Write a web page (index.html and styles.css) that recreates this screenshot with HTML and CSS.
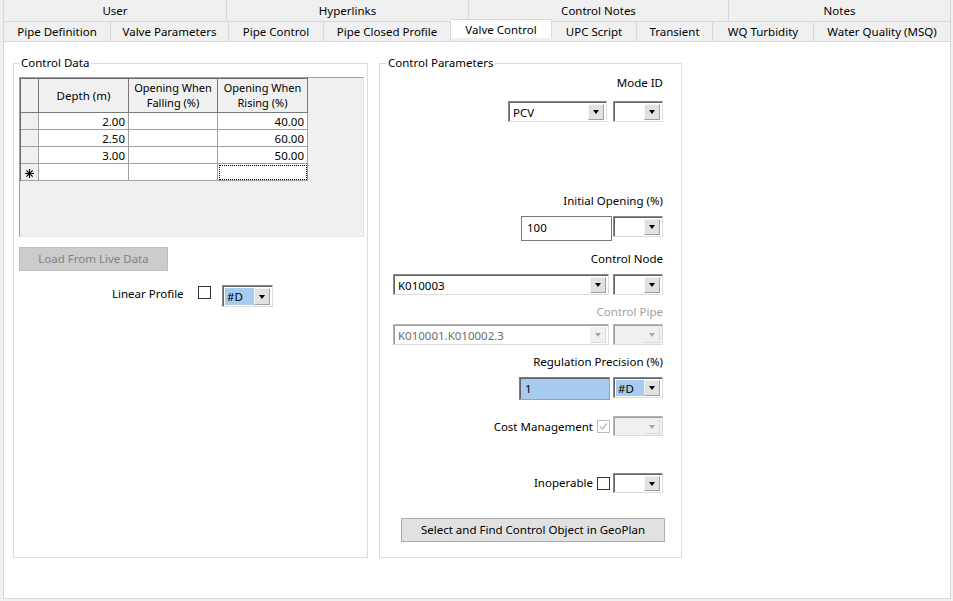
FILE: index.html
```html
<!DOCTYPE html>
<html>
<head>
<meta charset="utf-8">
<title>Valve Control</title>
<link rel="stylesheet" href="styles.css">
</head>
<body>
<div class="tabrow top">
  <div class="tab t-user">User</div>
  <div class="tab t-hyper">Hyperlinks</div>
  <div class="tab t-cnotes">Control Notes</div>
  <div class="tab t-notes">Notes</div>
</div>
<div class="tabrow bottom">
  <div class="tab t-pdef">Pipe Definition</div>
  <div class="tab t-vpar">Valve Parameters</div>
  <div class="tab t-pctl">Pipe Control</div>
  <div class="tab t-pcp">Pipe Closed Profile</div>
  <div class="tab t-vctl selected">Valve Control</div>
  <div class="tab t-upc">UPC Script</div>
  <div class="tab t-trans">Transient</div>
  <div class="tab t-wqt">WQ Turbidity</div>
  <div class="tab t-wqm">Water Quality (MSQ)</div>
</div>
<div class="panel">
  <fieldset class="group left">
    <legend>Control Data</legend>
    <div class="grid">
      <table>
        <colgroup><col class="c-rh"><col class="c-depth"><col class="c-fall"><col class="c-rise"></colgroup>
        <thead>
          <tr><th class="rh"></th><th>Depth (m)</th><th><span class="hl">Opening When</span><span class="hl">Falling (%)</span></th><th><span class="hl">Opening When</span><span class="hl">Rising (%)</span></th></tr>
        </thead>
        <tbody>
          <tr><td class="rh"></td><td>2.00</td><td></td><td>40.00</td></tr>
          <tr><td class="rh"></td><td>2.50</td><td></td><td>60.00</td></tr>
          <tr><td class="rh"></td><td>3.00</td><td></td><td>50.00</td></tr>
          <tr><td class="rh star"><svg width="9" height="9" viewBox="0 0 9 9"><path d="M4.5 0V9M0 4.5H9M1.3 1.3L7.7 7.7M7.7 1.3L1.3 7.7" stroke="#000" stroke-width="1.1"/></svg></td><td></td><td></td><td class="focus"></td></tr>
        </tbody>
      </table>
    </div>
    <button class="btn disabled load">Load From Live Data</button>
    <div class="linear">
      <span class="linear-label">Linear Profile</span>
      <span class="check"></span>
      <div class="combo lp"><span class="val sel">#D</span><span class="arrow"></span></div>
    </div>
  </fieldset>
  <fieldset class="group right">
    <legend>Control Parameters</legend>
    <div class="lbl l-mode">Mode ID</div>
    <div class="row r-mode">
      <div class="combo w-pcv"><span class="val">PCV</span><span class="arrow"></span></div>
      <div class="combo small"><span class="val"></span><span class="arrow"></span></div>
    </div>
    <div class="lbl l-init">Initial Opening (%)</div>
    <div class="row r-init">
      <div class="field f-init">100</div>
      <div class="combo small"><span class="val"></span><span class="arrow"></span></div>
    </div>
    <div class="lbl l-node">Control Node</div>
    <div class="row r-node">
      <div class="combo w-long"><span class="val">K010003</span><span class="arrow"></span></div>
      <div class="combo small"><span class="val"></span><span class="arrow"></span></div>
    </div>
    <div class="lbl dim l-pipe">Control Pipe</div>
    <div class="row r-pipe">
      <div class="combo w-long disabled wide"><span class="val">K010001.K010002.3</span><span class="arrow"></span></div>
      <div class="combo small disabled"><span class="val"></span><span class="arrow"></span></div>
    </div>
    <div class="lbl l-reg">Regulation Precision (%)</div>
    <div class="row r-reg">
      <div class="field f-reg sel">1</div>
      <div class="combo small"><span class="val sel">#D</span><span class="arrow"></span></div>
    </div>
    <div class="row r-cost">
      <span class="row-label">Cost Management</span>
      <span class="check disabled checked"><svg width="11" height="11" viewBox="0 0 11 11"><path d="M2 5.5L4.3 8L9 2.5" fill="none" stroke="#bcbcbc" stroke-width="1.2"/></svg></span>
      <div class="combo small disabled short"><span class="val"></span><span class="arrow"></span></div>
    </div>
    <div class="row r-inop">
      <span class="row-label">Inoperable</span>
      <span class="check"></span>
      <div class="combo small short"><span class="val"></span><span class="arrow"></span></div>
    </div>
    <button class="btn find">Select and Find Control Object in GeoPlan</button>
  </fieldset>
</div>
</body>
</html>
```
FILE: styles.css
```css
* { box-sizing: border-box; }
html, body { margin: 0; padding: 0; }
body {
  background: #f0f0f0;
  font-family: "Noto Sans", "Segoe UI", "Liberation Sans", sans-serif;
  font-size: 11.5px;
  line-height: 16px;
  color: #000;
  width: 953px;
  height: 601px;
  overflow: hidden;
}

/* tabs */
.tabrow { display: flex; padding-left: 3px; }
.tabrow.top { height: 22px; }
.tabrow.bottom { height: 19px; }
.tab {
  flex: none;
  display: flex;
  align-items: center;
  justify-content: center;
  white-space: nowrap;
  border-right: 1px solid #d9d9d9;
}
.tabrow .tab:first-child { border-left: 1px solid #d9d9d9; }
.tabrow.top .tab { height: 22px; border-bottom: 1px solid #d9d9d9; }
.tabrow.bottom .tab { height: 19px; padding-top: 1px; }
.tab.selected {
  background: #fff;
  height: 23px;
  margin-top: -3px;
  padding-top: 0;
  border-top: 1px solid #d9d9d9;
  position: relative;
  z-index: 2;
}
.t-user { width: 224px; }
.t-hyper { width: 242px; }
.t-cnotes { width: 260px; }
.t-notes { width: 222px; }
.t-pdef { width: 108px; }
.t-vpar { width: 118px; }
.t-pctl { width: 95px; }
.t-pcp { width: 127px; }
.t-vctl { width: 101px; }
.t-upc { width: 85px; }
.t-trans { width: 76px; }
.t-wqt { width: 101px; }
.t-wqm { width: 137px; }

/* panel */
.panel {
  margin-left: 3px;
  width: 948px;
  height: 558px;
  background: #fff;
  border: 1px solid #d9d9d9;
  padding: 13px 0 0 9px;
  display: flex;
  align-items: flex-start;
  gap: 11px;
}
.group {
  margin: 0;
  min-width: 0;
  height: 503px;
  border: 1px solid #dcdcdc;
}
.group legend { padding: 0 2px; line-height: 16px; }
.group.left { width: 355px; padding: 0 3px 0 5px; }
.group.right {
  width: 303px;
  padding: 0 18px 0 13px;
  display: flex;
  flex-direction: column;
  align-items: flex-end;
}
.group.right legend { margin-left: -7px; }

/* grid */
.grid {
  margin-top: 6px;
  height: 160px;
  background: #f0f0f0;
  border-top: 1px solid #a0a0a0;
  border-left: 1px solid #a0a0a0;
  border-right: 1px solid #e3e3e3;
  border-bottom: 1px solid #e3e3e3;
}
.grid table {
  border-collapse: separate;
  border-spacing: 0;
  table-layout: fixed;
  width: 287px;
  border-top: 1px solid #696969;
  border-left: 1px solid #696969;
}
.c-rh { width: 18px; }
.c-depth { width: 90px; }
.c-fall { width: 89px; }
.c-rise { width: 90px; }
.grid th, .grid td { box-sizing: border-box; padding: 0; }
.grid th {
  height: 34px;
  font-weight: normal;
  background: #f0f0f0;
  text-align: center;
  line-height: 15px;
  padding-bottom: 1px;
  border-right: 1px solid #7a7a7a;
  border-bottom: 1px solid #7a7a7a;
}
.grid th .hl { display: block; font-size: 11px; line-height: 15px; white-space: nowrap; }
.grid td {
  height: 17px;
  background: #fff;
  text-align: right;
  padding-right: 3px;
  line-height: 15px;
  border-right: 1px solid #a0a0a0;
  border-bottom: 1px solid #a0a0a0;
}
.grid .rh { background: #f0f0f0; }
.grid td.rh { border-right-color: #a0a0a0; }
.grid td.star { text-align: center; padding: 0; }
.grid td.star svg { display: block; margin: 3px auto 0; }
.grid td.focus { outline: 1px dotted #000; outline-offset: -2px; }

/* buttons */
.btn {
  font: inherit;
  display: block;
  padding: 0;
  height: 24px;
  text-align: center;
}
.btn.load {
  margin-top: 10px;
  width: 149px;
  background: #cccccc;
  border: 1px solid #bfbfbf;
  color: #838383;
}
.btn.find {
  align-self: flex-start;
  margin-left: 8px;
  margin-top: 25px;
  width: 264px;
  background: #e1e1e1;
  border: 1px solid #adadad;
  color: #000;
}

/* linear profile */
.linear {
  margin-top: 14px;
  display: flex;
  align-items: flex-start;
  padding-left: 93px;
}
.linear-label { width: 86px; line-height: 16px; margin-top: 1px; }
.linear .check { margin-top: 1px; }
.linear .combo { margin-left: 11px; height: 22px; }

/* checkbox */
.check {
  flex: none;
  width: 13px;
  height: 13px;
  border: 1px solid #333;
  background: #fff;
  display: block;
}
.check.disabled { border-color: #bcbcbc; }
.check svg { display: block; }

/* combo */
.combo {
  flex: none;
  display: flex;
  align-items: stretch;
  height: 21px;
  background: #fff;
  border-top: 1px solid #8a8a8a;
  border-left: 1px solid #8a8a8a;
  border-right: 1px solid #dcdcdc;
  border-bottom: 1px solid #dcdcdc;
  box-shadow: inset 1px 1px 0 #646464;
  padding: 1px;
}
.combo .val {
  flex: 1;
  padding-left: 2px;
  line-height: 17px;
  white-space: nowrap;
  overflow: hidden;
  margin: 1px 0 0 1px;
}
.combo .val.sel, .field.sel { background: #a8cbf0; }
.combo .arrow {
  flex: none;
  width: 16px;
  margin: 1px 1px 0 0;
  background: #e1e1e1;
  border-top: 1px solid #f4f4f4;
  border-left: 1px solid #f4f4f4;
  border-right: 1px solid #a0a0a0;
  border-bottom: 1px solid #a0a0a0;
  display: flex;
  align-items: center;
  justify-content: center;
}
.combo .arrow::after {
  content: "";
  width: 0;
  height: 0;
  border-left: 3.5px solid transparent;
  border-right: 3.5px solid transparent;
  border-top: 4px solid #000;
}
.combo.disabled { background: #f0f0f0; border-top-color: #b4b4b4; border-left-color: #b4b4b4; box-shadow: inset 1px 1px 0 #a0a0a0; }
.combo.disabled.wide { background: #fff; }
.combo.disabled .val { color: #6d6d6d; }
.combo.disabled .arrow { background: #f0f0f0; border-color: #f0f0f0 #dadada #dadada #f0f0f0; }
.combo.disabled .arrow::after { border-top-color: #a8a8a8; }
.combo.short { height: 20px; }
.combo.lp { width: 51px; }
.combo.small { width: 50px; }
.combo.w-pcv { width: 99px; }
.combo.w-long { width: 216px; }

/* fields */
.field {
  flex: none;
  width: 91px;
  padding-left: 5px;
  display: flex;
  align-items: center;
  background: #fff;
}
.f-init { height: 25px; border: 1px solid #7a7a7a; padding-bottom: 2px; }
.f-reg {
  height: 23px;
  border-top: 1px solid #7a7a7a;
  border-left: 1px solid #7a7a7a;
  border-right: 1px solid #a0a0a0;
  border-bottom: 1px solid #a0a0a0;
  box-shadow: inset 1px 1px 0 #646464;
}

/* right column rows */
.lbl { line-height: 16px; white-space: nowrap; }
.lbl.dim { color: #a0a0a0; }
.row { display: flex; align-items: flex-start; }
.l-mode { margin-top: 4px; }
.r-mode { margin-top: 10px; gap: 6px; }
.l-init { margin-top: 71px; }
.r-init { margin-top: 7px; gap: 1px; }
.l-node { margin-top: 10px; }
.r-node { margin-top: 7px; gap: 4px; }
.l-pipe { margin-top: 9px; }
.r-pipe { margin-top: 4px; gap: 4px; }
.l-reg { margin-top: 9px; }
.r-reg { margin-top: 7px; gap: 3px; }
.r-cost, .r-inop { align-items: center; }
.r-cost { margin-top: 16px; }
.r-cost .row-label { margin-top: 2px; }
.r-inop { margin-top: 37px; }
.row-label { margin-right: 4px; white-space: nowrap; }
.r-cost .check, .r-inop .check { margin-right: 3px; }
```
